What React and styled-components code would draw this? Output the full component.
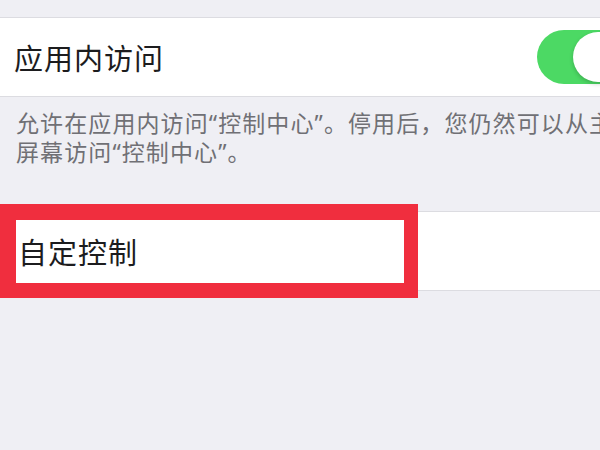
import React from "react";
import styled, { createGlobalStyle } from "styled-components";

const GlobalStyle = createGlobalStyle`
  html, body {
    margin: 0;
    padding: 0;
    background: #efeff4;
    overflow: hidden;
  }
  body {
    font-family: "Noto Sans CJK SC", "Noto Sans", sans-serif;
    width: 600px;
    height: 450px;
  }
`;

export default function App() {
  return (
    <Page>
      <GlobalStyle />
      <Group>
        <Row>
          <Label>应用内访问</Label>
          <Switch>
            <Knob />
          </Switch>
        </Row>
      </Group>
      <Footer>
        <Line>允许在应用内访问“控制中心”。停用后，您仍然可以从主</Line>
        <Line>屏幕访问“控制中心”。</Line>
      </Footer>
      <Group>
        <Row $indent={18}>
          <Label>自定控制</Label>
        </Row>
        <Highlight />
      </Group>
    </Page>
  );
}

// ----------------- Styles section ---------------------

const Page = styled.div`
  padding-top: 17px;
  width: 600px;
  height: 450px;
  box-sizing: border-box;
  overflow: hidden;
`;

const Group = styled.div`
  position: relative;
  background: #fff;
  border-top: 1px solid #dcdce1;
  border-bottom: 1px solid #dcdce1;
`;

const Row = styled.div`
  height: 78px;
  display: flex;
  align-items: center;
  justify-content: space-between;
  padding-left: ${(p) => p.$indent || 14}px;
  overflow: hidden;
`;

const Label = styled.span`
  font-size: 29px;
  color: #1c1c1e;
  letter-spacing: 1px;
`;

const Switch = styled.div`
  flex: none;
  width: 88px;
  height: 54px;
  margin-right: -25px;
  border-radius: 27px;
  background: #4cd964;
  display: flex;
  align-items: center;
  justify-content: flex-end;
  padding: 2px;
  box-sizing: border-box;
`;

const Knob = styled.div`
  width: 50px;
  height: 50px;
  border-radius: 50%;
  background: #fff;
  box-shadow: 0 2px 4px rgba(0, 0, 0, 0.2);
`;

const Footer = styled.div`
  padding: 12px 0 44px 16px;
  color: #707075;
  font-family: "Noto Sans", "Noto Sans CJK SC", sans-serif;
  font-size: 23px;
  line-height: 29px;
  letter-spacing: 1.1px;
`;

const Line = styled.div`
  white-space: nowrap;
`;

const Highlight = styled.div`
  position: absolute;
  left: 0;
  top: -8px;
  width: 418px;
  height: 94px;
  box-sizing: border-box;
  border: 16px solid #f02e3e;
  border-right-width: 14px;
  border-bottom-width: 15px;
`;
